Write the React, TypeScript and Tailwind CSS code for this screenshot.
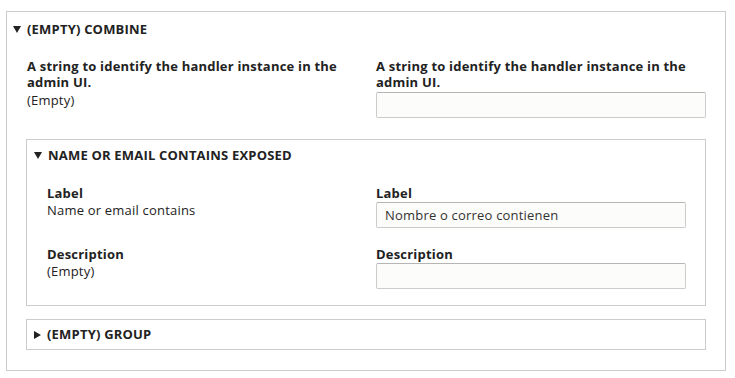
import type { ReactNode } from 'react'

function Caret({ open }: { open: boolean }) {
  return open ? (
    <svg viewBox="0 0 8 7" className="w-[8px] h-[7px] shrink-0" fill="#222">
      <path d="M0 0h8L4 7z" />
    </svg>
  ) : (
    <svg viewBox="0 0 7 8" className="w-[7px] h-[8px] shrink-0" fill="#222">
      <path d="M0 0v8l7-4z" />
    </svg>
  )
}

function Summary({ open, title, className }: { open: boolean; title: string; className: string }) {
  return (
    <div className={`flex items-center gap-[6px] font-bold uppercase text-[#222] ${className}`}>
      <Caret open={open} />
      <span>{title}</span>
    </div>
  )
}

function TextInput({ value, width }: { value?: string; width: string }) {
  return (
    <div
      className={`${width} h-[26px] flex items-center px-[8px] rounded-[2px] border border-[#ccc] border-t-[#b5b5b5] bg-[#fcfcfa] text-[#333]`}
    >
      {value}
    </div>
  )
}

function Row({ left, right }: { left: ReactNode; right: ReactNode }) {
  return (
    <div className="flex">
      <div className="flex-1">{left}</div>
      {right}
    </div>
  )
}

export default function App() {
  return (
    <div
      className="w-[735px] h-[378px] bg-white pt-[11px] pl-[6px] text-[13px] leading-[17px] tracking-[0.2px] text-[#222]"
      style={{ fontFamily: '"Open Sans", "DejaVu Sans", sans-serif' }}
    >
      <div className="w-[720px] h-[360px] border border-[#ccc]">
        <Summary open title="(Empty) Combine" className="h-[34px] pl-[6px]" />

        <div className="px-[19px] pt-[12px]">
          <Row
            left={
              <div className="pl-px w-[330px]">
                <div className="font-bold leading-[16px]">A string to identify the handler instance in the admin UI.</div>
                <div className="mt-[2px] leading-[16px]">(Empty)</div>
              </div>
            }
            right={
              <div className="w-[330px]">
                <div className="font-bold leading-[16px]">A string to identify the handler instance in the admin UI.</div>
                <div className="mt-[2px]">
                  <TextInput width="w-[330px]" />
                </div>
              </div>
            }
          />

          <div className="mt-[21px] border border-[#ccc] h-[167px]">
            <Summary open title="Name or email contains exposed" className="h-[31px] pl-[7px]" />
            <div className="pl-[20px] pr-[19px] pt-[14px] flex flex-col gap-[18px]">
              <Row
                left={
                  <div>
                    <div className="font-bold">Label</div>
                    <div>Name or email contains</div>
                  </div>
                }
                right={
                  <div className="w-[310px]">
                    <div className="font-bold">Label</div>
                    <TextInput value="Nombre o correo contienen" width="w-[310px]" />
                  </div>
                }
              />
              <Row
                left={
                  <div>
                    <div className="font-bold">Description</div>
                    <div>(Empty)</div>
                  </div>
                }
                right={
                  <div className="w-[310px]">
                    <div className="font-bold">Description</div>
                    <TextInput width="w-[310px]" />
                  </div>
                }
              />
            </div>
          </div>

          <div className="mt-[13px] border border-[#ccc]">
            <Summary open={false} title="(Empty) Group" className="h-[29px] pl-[7px]" />
          </div>
        </div>
      </div>
    </div>
  )
}
